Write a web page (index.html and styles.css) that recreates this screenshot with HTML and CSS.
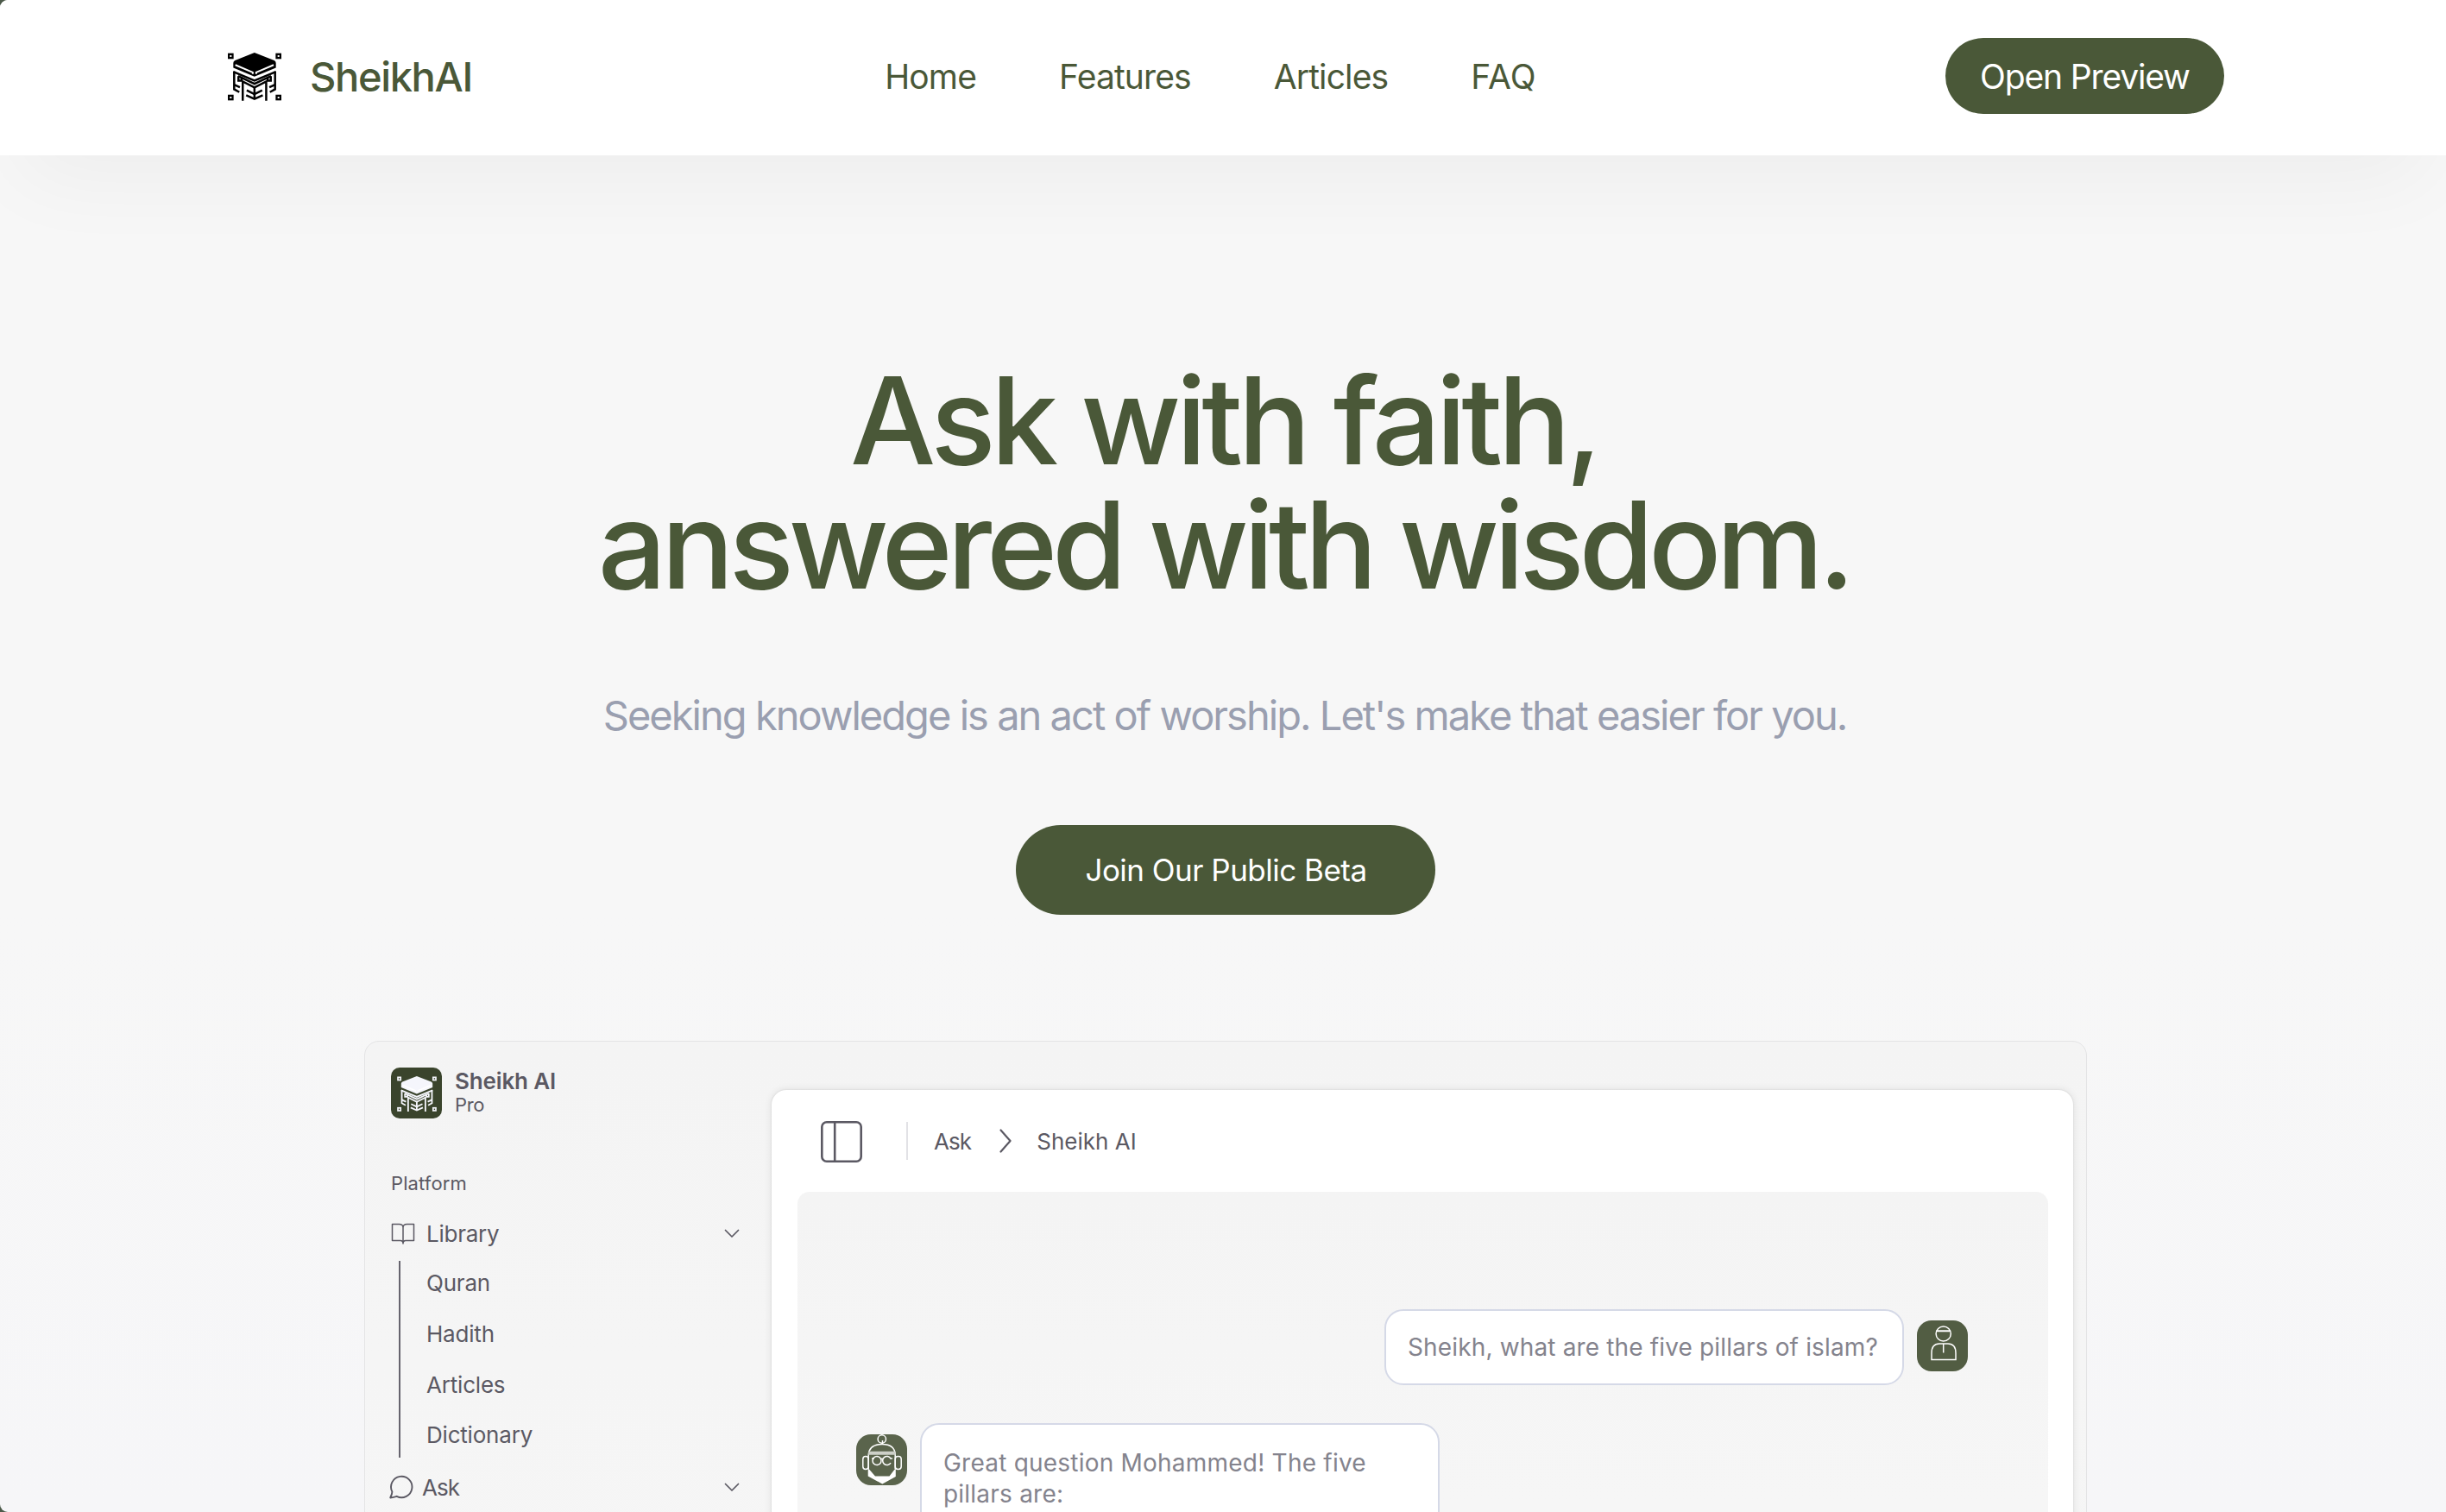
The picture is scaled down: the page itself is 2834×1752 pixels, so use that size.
FILE: index.html
```html
<!DOCTYPE html>
<html lang="en">
<head>
<meta charset="utf-8">
<title>SheikhAI</title>
<link rel="stylesheet" href="styles.css">
</head>
<body>
<svg class="defs" aria-hidden="true">
  <symbol id="kaaba" viewBox="0 0 187 172">
    <g fill="none" stroke="currentColor" stroke-width="7">
      <rect x="3.5" y="5.5" width="13" height="13"/>
      <rect x="170.5" y="5.5" width="13" height="13"/>
      <rect x="3.5" y="150.5" width="13" height="13"/>
      <rect x="170.5" y="150.5" width="13" height="13"/>
    </g>
    <path fill="currentColor" d="M93 0 162 27Q168 30 168 36V53L93 84 19 53V36Q19 30 25 27Z"/>
    <path class="slit" fill="none" stroke-width="6" d="M26 43 87 69V75M160 43 99 69V75"/>
    <g fill="none" stroke="currentColor" stroke-width="7.5">
      <path d="M19 67 93 98 168 67"/>
      <path d="M22 66V128L40 138M165 66V128L147 138"/>
      <path d="M36 82 93 109 151 82"/>
      <path d="M37 82V98H48V88M150 82V98H139V88"/>
      <path d="M22 112 42 121M165 112 145 121"/>
      <path d="M52 168V101L93 122 134 101V168"/>
      <path d="M93 118V160"/>
      <path d="M66 132 93 145 120 132M64 149 93 162 122 149"/>
    </g>
  </symbol>
  <symbol id="chevron-down" viewBox="0 0 18 11">
    <path d="M1.5 1.5 9 9 16.500 1.500" fill="none" stroke="currentColor" stroke-width="1.7" stroke-linecap="round" stroke-linejoin="round"/>
  </symbol>
</svg>
<div class="page">
  <header class="header">
    <a class="brand"><svg class="brand-mark"><use href="#kaaba"/></svg><span>SheikhAI</span></a>
    <nav class="nav"><a>Home</a><a>Features</a><a>Articles</a><a>FAQ</a></nav>
    <a class="btn btn-preview">Open Preview</a>
  </header>
  <main class="hero">
    <h1 class="headline"><span class="line-one">Ask with faith,</span><span class="line-two">answered with wisdom.</span></h1>
    <p class="lead">Seeking knowledge is an act of worship. Let's make that easier for you.</p>
    <a class="btn btn-beta">Join Our Public Beta</a>
    <section class="app">
      <aside class="sidebar">
        <div class="account">
          <div class="tile"><svg class="tile-mark"><use href="#kaaba"/></svg></div>
          <div class="account-text"><div class="account-name">Sheikh AI</div><div class="account-plan">Pro</div></div>
        </div>
        <div class="group-label">Platform</div>
        <div class="row row-library">
          <svg class="book" viewBox="0 0 28 25" fill="none" stroke="currentColor" stroke-width="1.500" stroke-linejoin="round"><path d="M14 5.500C14 2.500 12 1.500 9.500 1.500H1.500V20.500H11Q14 20.500 14 24Q14 20.500 17 20.500H26.500V1.500H18.500C16 1.500 14 2.500 14 5.500ZM14 5.500V24"/></svg>
          <span>Library</span>
          <svg class="chev"><use href="#chevron-down"/></svg>
        </div>
        <ul class="sub"><li>Quran</li><li>Hadith</li><li>Articles</li><li>Dictionary</li></ul>
        <div class="row row-ask">
          <svg class="bubble-icon" viewBox="0 0 28 28" fill="none" stroke="currentColor" stroke-width="1.900" stroke-linejoin="round"><path d="M3.400 19.500A12.200 12.200 0 1 1 8.700 24.800Q5 26 1.200 26.500Q3.400 22 3.400 19.500Z"/></svg>
          <span>Ask</span>
          <svg class="chev"><use href="#chevron-down"/></svg>
        </div>
      </aside>
      <div class="panel">
        <div class="toolbar">
          <svg class="layout-icon" viewBox="0 0 48 48" fill="none" stroke="currentColor" stroke-width="2.600"><rect x="1.300" y="1.300" width="45.400" height="45.400" rx="5.500"/><path d="M16.200 1.500V46.500"/></svg>
          <span class="sep"></span>
          <span class="crumb crumb-ask">Ask</span>
          <svg class="chev-right" viewBox="0 0 14 28" fill="none" stroke="currentColor" stroke-width="2.200" stroke-linecap="round" stroke-linejoin="round"><path d="M1.500 1.500 12.500 14 1.500 26.500"/></svg>
          <span class="crumb">Sheikh AI</span>
        </div>
        <div class="chat">
          <div class="msg msg-user">
            <div class="bubble">Sheikh, what are the five pillars of islam?</div>
            <svg class="avatar avatar-user" viewBox="0 0 59 59" fill="none" stroke="#fff" stroke-width="1.500"><ellipse cx="30.700" cy="15.500" rx="8.600" ry="8.600"/><path d="M22.500 12.300H39" stroke-width="2"/><path d="M17 45.500V38Q17 27 26 27H36Q45 27 45 38V45.500ZM30.700 27V37.500"/></svg>
          </div>
          <div class="msg msg-bot">
            <svg class="avatar avatar-bot" viewBox="0 0 59 59" fill="none" stroke="#fff" stroke-width="1.500"><circle cx="29.800" cy="5.500" r="4.700"/><path d="M30.500 7V12M14.200 40V24Q15 11.500 30 11.500Q45 11.500 45.200 24V40"/><path d="M14 21.800H45.500" stroke="#cdd0c8" stroke-width="4"/><rect x="7.800" y="25.500" width="6.400" height="15" rx="3.200"/><rect x="45.200" y="25.500" width="7" height="15" rx="3.200"/><circle cx="24" cy="30.500" r="5"/><path d="M40 28A5 5 0 1 0 40 33M18 28H21M29 29Q30 27.500 31 29M39 28H42"/><path fill="#fff" stroke="none" d="M13.700 39 22 48.500H38.500L45.800 39V49L30.300 57.500 13.700 48.500Z"/></svg>
            <div class="bubble">Great question Mohammed! The five pillars are:</div>
          </div>
        </div>
      </div>
    </section>
  </main>
</div>
</body>
</html>
```
FILE: styles.css
```css
* { box-sizing: border-box; }
body { margin: 0; background: #4c5a4a; font-family: "Inter", sans-serif; color: #5b5963; overflow: hidden; }
.defs { position: absolute; width: 0; height: 0; }
.page { height: 1752px; overflow: hidden; border-radius: 9px 0 0 9px; background: linear-gradient(#f7f7f7 60%, #f6f6f8); }

.header { position: relative; height: 180px; padding: 0 257px 2px 264px; display: flex; align-items: center; justify-content: space-between; background: #fff; box-shadow: 0 50px 100px -24px rgba(0, 0, 0, .045); color: #4a5838; }
.brand { display: flex; align-items: center; gap: 33px; font-size: 47px; font-weight: 500; letter-spacing: -1.35px; }
.brand span { padding-bottom: 2px; }
.brand-mark { width: 62px; height: 57px; color: #000; }
.slit { stroke: #fff; }
.nav { display: flex; gap: 96px; padding: 0 0 2px 4px; font-size: 39px; letter-spacing: -.87px; }
.nav a:last-child { letter-spacing: .2px; }
.btn { display: flex; align-items: center; justify-content: center; border-radius: 60px; background: #4a5838; color: #fff; }
.btn-preview { width: 323px; height: 88px; margin-bottom: 2px; padding-top: 1px; font-size: 39px; letter-spacing: -1.16px; }

.hero { padding: 235px 0 0 6px; display: flex; flex-direction: column; align-items: center; }
.headline { margin: 0; padding-right: 4px; font-size: 140px; line-height: 144px; font-weight: 500; text-align: center; color: #4a5838; }
.headline span { display: block; }
.line-one { letter-spacing: -5.63px; }
.line-two { letter-spacing: -6.08px; }
.lead { margin: 96px 0 0; padding-right: 2px; font-size: 47px; line-height: 60px; letter-spacing: -1.966px; color: #9a9fb0; white-space: nowrap; }
.btn-beta { width: 486px; height: 104px; margin-top: 97px; padding-left: 1px; font-size: 35px; letter-spacing: -.507px; }

.app { width: 1996px; height: 1100px; margin-top: 146px; display: flex; border: 1px solid #e4e4e5; border-radius: 17px; background: linear-gradient(#f4f4f4, #f7f7f7); }
.sidebar { width: 471px; padding: 30px 37px 0 30px; font-size: 26px; }
.account { display: flex; gap: 15px; }
.tile { width: 59px; height: 59px; display: flex; align-items: center; justify-content: center; border-radius: 10px; background: #3a442c; color: #f5f6fc; }
.tile-mark { width: 46px; height: 42px; margin-top: 2px; }
.account-name { margin-top: 1px; line-height: 30px; font-weight: 600; letter-spacing: -.15px; }
.account-plan { font-size: 22px; line-height: 24px; letter-spacing: -.4px; }
.group-label { margin-top: 63px; font-size: 22px; line-height: 24px; letter-spacing: .1px; }
.row { height: 40px; display: flex; align-items: center; letter-spacing: -.25px; }
.row-library { margin-top: 26px; }
.row-ask { margin-top: 14px; }
.book { width: 28px; height: 25px; margin-right: 13px; }
.bubble-icon { width: 28px; height: 28px; margin: 0 10px 0 -2px; }
.row-ask span { letter-spacing: -.9px; }
.chev { width: 18px; height: 11px; margin-left: auto; }
.sub { height: 228px; margin: 12px 0 0 9px; padding: 0 0 0 30px; border-left: 2px solid #66646e; list-style: none; letter-spacing: -.2px; }
.sub li { height: 58.8px; line-height: 52px; }

.panel { width: 1508px; margin-top: 56px; border-radius: 17px; background: #fff; box-shadow: 0 0 10px rgba(0, 0, 0, .10), 0 0 2px rgba(0, 0, 0, .12); }
.toolbar { height: 118px; padding: 0 0 0 57px; display: flex; align-items: center; font-size: 26px; }
.layout-icon { width: 48px; height: 48px; margin-top: 2px; }
.sep { width: 2px; height: 44px; margin-left: 51px; background: #e2e2e6; }
.crumb-ask { margin: 0 33px 0 30px; letter-spacing: -.9px; }
.chev-right { width: 14px; height: 28px; margin-right: 29px; }
.chat { height: 900px; margin: 0 29px 0 30px; padding: 136px 93px 0 68px; border-radius: 14px; background: linear-gradient(#f4f4f4, #f6f6f6 40%); }
.msg { display: flex; }
.msg-user { justify-content: flex-end; gap: 15px; }
.msg-bot { margin-top: 44px; gap: 15px; }
.bubble { width: 602px; padding: 27px 20px 26px 25px; border: 2px solid #d5d9e7; border-radius: 22px; background: #fff; font-size: 28px; line-height: 35.5px; letter-spacing: .22px; color: #84838d; }
.msg-user .bubble { height: 88px; padding: 25px 0 0 25px; letter-spacing: .15px; white-space: nowrap; }
.msg-bot .bubble { height: 400px; }
.avatar { width: 59px; height: 59px; margin-top: 13px; border-radius: 17px; background: #525d43; }
.avatar-bot { background: #5a644c; }
```
